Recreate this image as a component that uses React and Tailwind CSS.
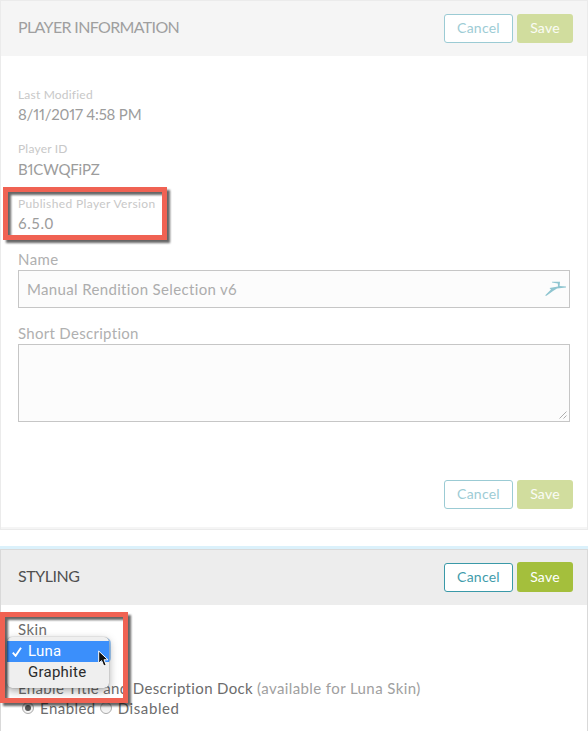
import React from "react";

function Buttons({ active = false, className = "" }) {
  return (
    <div className={"flex items-end gap-1 " + className}>
      <button
        className={
          "h-[29px] w-[69px] rounded-[3px] border bg-white pb-[2px] text-center text-[14px] leading-[25px] tracking-[0.25px] " +
          (active ? "border-[#3a99a8] text-[#3f9cab]" : "border-[#9bcbd4] text-[#9dccd5]")
        }
      >
        Cancel
      </button>
      <button
        className={
          "w-[56px] rounded-[3px] pb-[2px] text-center text-[14px] leading-[27px] tracking-[0.25px] " +
          (active ? "h-[30px] bg-[#a4bf3c] text-white" : "h-[29px] bg-[#d1dd9e] text-white/90")
        }
      >
        Save
      </button>
    </div>
  );
}

function Info({ label, value, labelClass, valueClass, className = "" }) {
  return (
    <div className={className}>
      <div className="h-4 text-[12px] leading-4 text-[#c8c8c8]">
        <span className={labelClass}>{label}</span>
      </div>
      <div className="mt-px h-5 text-[15px] leading-5 text-[#9c9c9c]">
        <span className={valueClass}>{value}</span>
      </div>
    </div>
  );
}

function Radio({ checked }) {
  return (
    <span className="flex h-3 w-3 items-center justify-center rounded-full border border-[#a8a8a8] bg-gradient-to-b from-[#e2e2e2] to-[#f8f8f8]">
      {checked && <span className="h-1.5 w-1.5 rounded-full bg-[#555]" />}
    </span>
  );
}

export default function App() {
  return (
    <div className="relative h-[731px] w-[588px] overflow-hidden bg-white font-['Lato',sans-serif] whitespace-nowrap">
      <section className="h-[530px] border border-[#ebebeb]">
        <header className="flex h-[55px] items-start justify-between bg-[#f5f5f5] pt-[13px] pr-[14px] pl-[17px]">
          <h2 className="mt-[3px] text-[16px] leading-5 text-[#9f9f9f]">
            <span className="tracking-[-0.65px]">PLAYER INFORMATION</span>
          </h2>
          <Buttons />
        </header>
        <div className="h-[473px] border-b-2 border-[#f5f5f5] pt-[31px] pr-[17px] pl-[17px]">
          <Info label="Last Modified" value="8/11/2017 4:58 PM" labelClass="tracking-[0.2px]" valueClass="tracking-[-0.2px] proportional-nums" />
          <Info className="mt-[17px]" label="Player ID" value="B1CWQFiPZ" labelClass="tracking-[0.2px]" valueClass="inline-block pt-px tracking-[-0.15px] proportional-nums" />
          <Info className="mt-[18px]" label="Published Player Version" value="6.5.0" labelClass="tracking-[0.37px]" valueClass="tracking-[0.5px]" />
          <div className="mt-4 h-5 text-[15px] leading-5 text-[#b0b0b0]">
            <span className="tracking-[0.45px]">Name</span>
          </div>
          <div className="mt-px flex h-[38px] items-center justify-between border border-[#c6c6c6] bg-[#fcfcfc] pr-[2px] pl-2 text-[15px] leading-5 text-[#adadad]">
            <span className="tracking-[0.35px]">Manual Rendition Selection v6</span>
            <svg width="22" height="16" viewBox="0 0 22 16" fill="#8fc5d0">
              <path d="M0 14.5 L6 8.6 L4.5 7 L13 5.6 L12.8 2.4 L7 1.6 L7 .8 L15 .8 L14.6 5 L21 5.4 L21 6.6 L12 7.6 L8 10 L1.5 14.8 Z" />
            </svg>
          </div>
          <div className="mt-[15px] h-5 text-[15px] leading-5 text-[#b0b0b0]">
            <span className="tracking-[0.3px]">Short Description</span>
          </div>
          <div className="mt-px flex h-[78px] items-end justify-end border border-[#c6c6c6] bg-[#fcfcfc] p-0.5">
            <svg width="8" height="8" viewBox="0 0 8 8" stroke="#a5a5a5" strokeWidth="0.9">
              <path d="M.5 7.5 L7.5 .5 M4.5 7.5 L7.5 4.5" />
            </svg>
          </div>
          <Buttons className="mt-[58px] mr-[-3px] justify-end" />
        </div>
      </section>

      <div className="mt-4 h-[3px] bg-[#dbf1fb]" />
      <section className="h-[190px] border border-[#d9d9d9]">
        <header className="flex h-[55px] items-start justify-between bg-[#ededed] pt-3 pr-[14px] pl-[17px]">
          <h2 className="mt-[4px] text-[16px] leading-5 text-[#505050]">
            <span className="tracking-[-0.45px]">STYLING</span>
          </h2>
          <Buttons active />
        </header>
        <div className="pt-[14px] pl-[17px] text-[15px] leading-5 text-[#6c6c6c]">
          <div className="h-5">
            <span className="tracking-[0.45px]">Skin</span>
          </div>
          <div className="mt-[39px] flex h-5">
            <span className="tracking-[0.36px]">Enable Title and Description Dock</span>
            <span className="ml-1 tracking-[0.4px] text-[#a0a0a0]">(available for Luna Skin)</span>
          </div>
          <div className="flex h-5 items-center pl-1">
            <Radio checked />
            <span className="ml-[6px] tracking-[0.45px]">Enabled</span>
            <span className="ml-1">
              <Radio />
            </span>
            <span className="ml-[6px] tracking-[0.6px]">Disabled</span>
          </div>
        </div>
      </section>

      <div className="absolute top-[638px] left-[12px] h-[25px] w-[99px] rounded-[5px] bg-[#a3cdf8]" />
      <div className="absolute top-[637px] left-[7px] h-[51px] w-[102px] rounded-[5px] bg-[#efefef] pt-1 font-['Roboto',sans-serif] text-[15px] shadow-[0_3px_8px_rgba(0,0,0,0.35),0_0_1px_rgba(0,0,0,0.5)]">
        <div className="flex h-[21px] items-center bg-[#3b8ffb] pl-[5px] leading-[21px] text-white">
          <svg width="10" height="10" viewBox="0 0 10 10" fill="none" stroke="white" strokeWidth="1.9">
            <path d="M.8 5.6 L3.6 8.8 L9 .8" />
          </svg>
          <span className="ml-[6px] tracking-[0.2px]">Luna</span>
        </div>
        <div className="h-[21px] pl-[21px] leading-[21px] tracking-[0.25px] text-[#2b2b2b]">Graphite</div>
      </div>

      <div className="absolute top-[187px] left-[3px] h-[53px] w-[164px] border-[5px] border-[#f06253] drop-shadow-[3px_3px_1px_rgba(0,0,0,0.6)]" />
      <div className="absolute top-[612px] left-0 h-[91px] w-[128px] border-[5px] border-[#f06253] drop-shadow-[3px_3px_1px_rgba(0,0,0,0.6)]" />

      <svg className="absolute top-[650px] left-[98px]" width="12" height="18" viewBox="0 0 12 18">
        <path d="M.7 1 V13.2 L3.6 10.6 L5.8 16 L8.2 15 L6 9.8 H10 Z" fill="#111" stroke="white" strokeWidth="1" />
      </svg>
    </div>
  );
}
